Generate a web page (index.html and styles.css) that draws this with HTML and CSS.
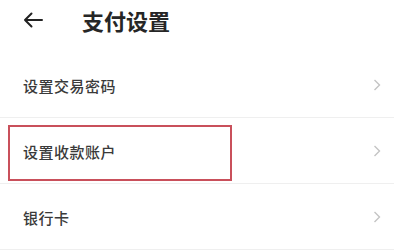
FILE: index.html
```html
<!DOCTYPE html>
<html lang="zh-CN">
<head>
<meta charset="utf-8">
<link rel="stylesheet" href="styles.css">
</head>
<body>
<div class="page">
  <header class="header">
    <svg class="back" width="20" height="16" viewBox="0 0 20 16">
      <path d="M19 8H2M8.5 1.5L2 8l6.5 6.5" fill="none" stroke="#222" stroke-width="2" stroke-linecap="round" stroke-linejoin="round"/>
    </svg>
    <h1 class="title">支付设置</h1>
  </header>
  <ul class="list">
    <li class="row"><span class="label">设置交易密码</span><svg class="chev" width="8" height="12" viewBox="0 0 8 12"><path d="M1.5 1l5 5-5 5" fill="none" stroke="#c4c4c4" stroke-width="1.4"/></svg></li>
    <li class="row highlighted"><span class="label">设置收款账户</span><svg class="chev" width="8" height="12" viewBox="0 0 8 12"><path d="M1.5 1l5 5-5 5" fill="none" stroke="#c4c4c4" stroke-width="1.4"/></svg><span class="mark"></span></li>
    <li class="row"><span class="label">银行卡</span><svg class="chev" width="8" height="12" viewBox="0 0 8 12"><path d="M1.5 1l5 5-5 5" fill="none" stroke="#c4c4c4" stroke-width="1.4"/></svg></li>
  </ul>
</div>
</body>
</html>
```
FILE: styles.css
```css
html, body {
  margin: 0;
  padding: 0;
  background: #ffffff;
}
body {
  font-family: "Noto Sans CJK SC", "Noto Sans", sans-serif;
  color: #333;
}
.page {
  width: 400px;
  height: 250px;
  overflow: hidden;
}
.header {
  height: 40px;
  display: flex;
  align-items: center;
  padding-left: 23px;
}
.back {
  display: block;
  flex: none;
}
.title {
  margin: 0 0 0 39px;
  font-size: 22px;
  font-weight: 700;
  color: #262626;
  line-height: 1;
}
.list {
  list-style: none;
  margin: 12px 0 0;
  padding: 0;
}
.row {
  position: relative;
  height: 65px;
  border-bottom: 1px solid #efefef;
  display: flex;
  align-items: center;
  justify-content: space-between;
  padding: 0 13px 0 23px;
  margin-right: 6px;
}
.label {
  font-size: 15px;
  letter-spacing: 0.5px;
  font-weight: 500;
  color: #3a3a3a;
  padding-top: 2px;
}
.chev {
  display: block;
}
.mark {
  position: absolute;
  left: 8px;
  top: 7px;
  width: 220px;
  height: 52px;
  border: 2px solid #c9505b;
}
```
